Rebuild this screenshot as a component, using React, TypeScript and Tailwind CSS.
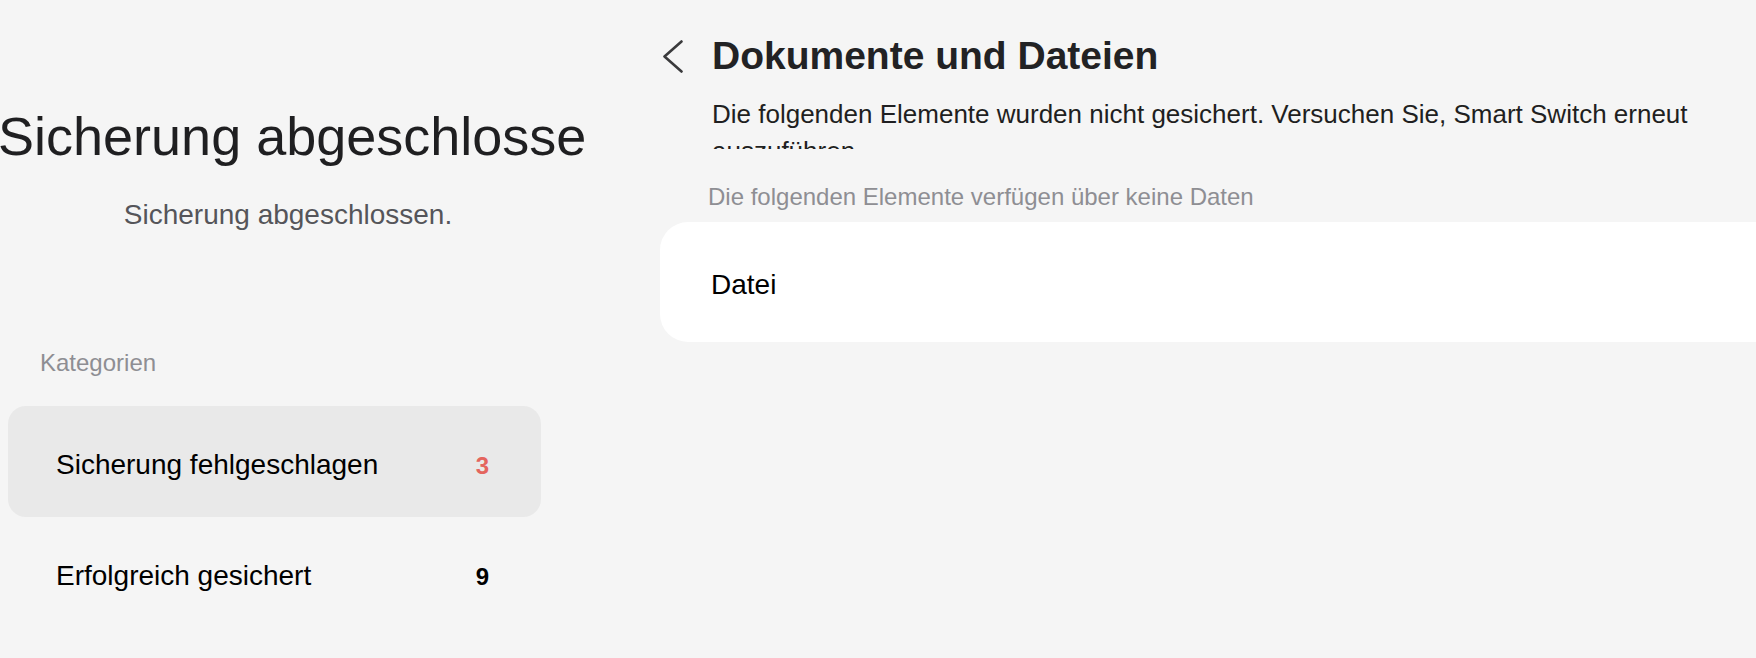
import React from "react";

export default function App() {
  return (
    <div
      className="w-[1756px] h-[658px] bg-[#f5f5f5] overflow-hidden flex"
      style={{ fontFamily: '"Liberation Sans", Arial, Helvetica, sans-serif' }}
    >
      {/* Left column */}
      <div className="w-[660px] shrink-0 flex flex-col pt-[104px]">
        <div className="ml-[-2px] whitespace-nowrap text-[54px] leading-[64px] text-[#1f1f21]">
          Sicherung abgeschlosse
        </div>
        <div className="mt-[31px] w-[576px] text-center text-[28px] leading-[32px] text-[#55555a]">
          Sicherung abgeschlossen.
        </div>
        <div className="mt-[118px] pl-[40px] text-[24px] leading-[28px] text-[#8e8e93]">
          Kategorien
        </div>
        <div className="mt-[29px] ml-[8px] w-[533px] h-[111px] rounded-[18px] bg-[#e9e9e9] flex items-baseline justify-between pl-[48px] pr-[52px] pt-[43px]">
          <span className="text-[28px] leading-[32px] text-black">Sicherung fehlgeschlagen</span>
          <span className="text-[24px] leading-[32px] font-bold text-[#e4655e]">3</span>
        </div>
        <div className="ml-[8px] w-[533px] h-[111px] flex items-baseline justify-between pl-[48px] pr-[52px] pt-[43px]">
          <span className="text-[28px] leading-[32px] text-black">Erfolgreich gesichert</span>
          <span className="text-[24px] leading-[32px] font-bold text-black">9</span>
        </div>
      </div>

      {/* Right column */}
      <div className="flex-1 min-w-0 flex flex-col">
        <div className="pt-[34px] flex items-center">
          <svg
            className="ml-[3px] shrink-0"
            width="20"
            height="34"
            viewBox="0 0 20 34"
            fill="none"
          >
            <polyline
              points="18.5,2.5 1.5,17.5 18.5,32.5"
              stroke="#3a3a3c"
              strokeWidth="2.6"
              strokeLinecap="round"
              strokeLinejoin="round"
            />
          </svg>
          <h1 className="ml-[29px] text-[39px] leading-[44px] font-bold text-[#222224] whitespace-nowrap">
            Dokumente und Dateien
          </h1>
        </div>
        <div className="mt-[18px] ml-[52px] w-[1010px] h-[53px] overflow-hidden text-[26px] leading-[37px] text-[#1f1f21]">
          Die folgenden Elemente wurden nicht gesichert. Versuchen Sie, Smart Switch erneut auszuführen
        </div>
        <div className="mt-[34px] ml-[48px] text-[24px] leading-[28px] text-[#8e8e93] whitespace-nowrap">
          Die folgenden Elemente verfügen über keine Daten
        </div>
        <div className="mt-[11px] w-[1130px] shrink-0 h-[120px] bg-white rounded-[28px] pl-[51px] pt-[47px]">
          <span className="text-[28px] leading-[32px] text-black">Datei</span>
        </div>
      </div>
    </div>
  );
}
